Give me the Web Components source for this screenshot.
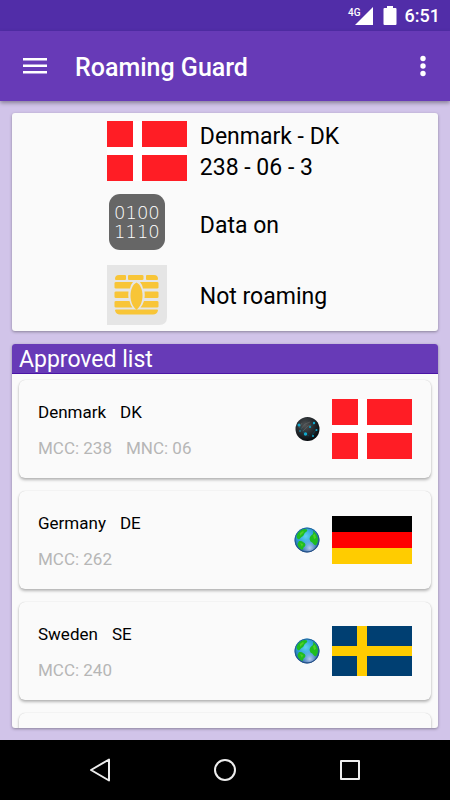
<!DOCTYPE html>
<html lang="en">
<head>
<meta charset="utf-8">
<meta name="viewport" content="width=device-width, initial-scale=1">
<title>Roaming Guard</title>
<style>
  html, body { margin: 0; height: 100%; }
  body { font-family: Roboto, "Noto Sans", sans-serif; color: #000; background: #d1c4e9; }
</style>
</head>
<body>
<roaming-app></roaming-app>
<script>
const define = (name, html, pick) => {
  customElements.define(name, class extends HTMLElement {
    constructor() {
      super();
      this.attachShadow({ mode: 'open' });
    }
    connectedCallback() {
      this.shadowRoot.innerHTML = html + (pick ? pick(this) : '');
    }
  });
};

const flags = {
  dk: `<svg viewBox="0 0 80 60" width="80" height="60"><path fill="#fff" d="M0 0h80v60H0z"/><path fill="#ff1d25" d="M0 0h26v26H0zM35 0h45v26H35zM0 34h26v26H0zM35 34h45v26H35z"/></svg>`,
  de: `<svg viewBox="0 0 80 48" width="80" height="48"><path d="M0 0h80v16H0z"/><path fill="#f00" d="M0 16h80v16H0z"/><path fill="#fc0" d="M0 32h80v16H0z"/></svg>`,
  se: `<svg viewBox="0 0 80 50" width="80" height="50"><path fill="#003f72" d="M0 0h80v50H0z"/><path fill="#fc0" d="M25 0h10v20h45v10H35v20H25V30H0V20h25z"/></svg>`
};

const globes = {
  day: `<svg viewBox="0 0 26 26" width="26" height="26"><defs>
    <radialGradient id="sea" cx=".45" cy=".35" r=".65"><stop offset="0" stop-color="#5fd2f2"/><stop offset=".5" stop-color="#2f9fd6"/><stop offset=".85" stop-color="#2468a8"/><stop offset="1" stop-color="#17427c"/></radialGradient>
    <radialGradient id="glow" cx=".62" cy=".85" r=".4"><stop offset="0" stop-color="#c4d4f5" stop-opacity=".9"/><stop offset="1" stop-color="#9fb8ea" stop-opacity="0"/></radialGradient></defs>
    <circle cx="13" cy="13" r="12.500" fill="url(#sea)"/><circle cx="13" cy="13" r="11.500" fill="url(#glow)"/>
    <path fill="#1fbd20" d="M2.500 8.500Q4 4.500 8 2.500q3-1 5 0 1 1.500-1 2.500-1.500.5-2 2.500-.5 1.500-2.500 2.500L5 12.500Q2.500 12 2.500 8.500zM19 3.500q4 3 5 8 .3 4-1.800 6.500-2 .5-2.700-1-1-2-3-2.500-1.800-2-.5-4.500 1-2 2.500-2.500 1.500-1 .5-4zM5 14q3-.5 4 1 2.500 1 2.500 3-.5 1.500-2 2.500l-1 2.500Q4 21 3.500 17z"/>
    <path fill="#75d932" opacity=".6" d="M6 6l3-2 1 1-4 4zM19 8l2-1 1 4-2 1zM6 16l3 1-1 3z"/>
    <circle cx="13" cy="13" r="12" fill="none" stroke="#1e4b83" opacity=".7"/></svg>`,
  night: `<svg viewBox="0 0 26 26" width="26" height="26"><defs>
    <radialGradient id="dark" cx=".4" cy=".35" r=".65"><stop offset="0" stop-color="#505456"/><stop offset=".5" stop-color="#2b3034"/><stop offset="1" stop-color="#080c10"/></radialGradient></defs>
    <circle cx="13.500" cy="13" r="12" fill="url(#dark)"/>
    <path fill="none" stroke="#6b6d6e" opacity=".5" d="M7 13l4-5 5-2M9 15l5-5 3-1M5 12l3-5"/>
    <path fill="none" stroke="#0f5266" opacity=".6" d="M5 9l5 8 5 3M16 11l5-4M18 19l4-5"/>
    <g fill="#11a8cc"><circle cx="5" cy="9" r="1.500"/><circle cx="11.500" cy="18" r="1.700"/><circle cx="20" cy="7" r="1.200"/><circle cx="16" cy="11" r="1"/><circle cx="19" cy="20" r="1"/><circle cx="22.500" cy="14" r="1"/><circle cx="6" cy="15" r=".8"/></g></svg>`
};

define('country-flag', `<style>:host{display:block;width:80px}svg{display:block}</style>`,
  el => flags[el.getAttribute('code')] || '');

define('globe-icon', `<style>:host{display:block;width:26px}svg{display:block}</style>`,
  el => globes[el.getAttribute('mode')] || '');

define('status-bar', `<style>
  :host{display:flex;justify-content:flex-end;align-items:center;height:31px;flex:none;padding:0 10px;background:#512da8;color:#fff;font-size:18px;line-height:24px;font-weight:500}
  svg{display:block}
  .net{font-size:10px;line-height:12px}
  .signal{display:flex;align-items:flex-start;margin-right:10px}
  .signal svg{margin-left:-6px}
  .battery{margin-right:8px}
  </style>
  <div class="signal"><span class="net">4G</span><svg width="18" height="18" viewBox="0 0 18 18"><path fill="#fff" d="M18 0v18H0z"/></svg></div>
  <svg class="battery" width="14" height="20" viewBox="0 0 14 20"><path fill="#fff" d="M4 0h6v2h2.500q1 0 1 1v15q0 1-1 1h-11q-1 0-1-1V3q0-1 1-1H4z"/></svg>
  <time>6:51</time>`);

define('app-toolbar', `<style>
  :host{display:flex;align-items:center;height:70px;flex:none;padding:0 12px 0 20px;background:#673ab7;color:#fff;box-shadow:0 2px 4px rgba(0,0,0,.35);z-index:1}
  button{display:block;border:0;padding:0;background:none;color:inherit}
  svg{display:block}
  h1{flex:1;margin:0 0 0 25px;padding-top:4px;font-size:25px;line-height:32px;font-weight:500}
  </style>
  <button aria-label="Menu"><svg width="30" height="30" viewBox="0 0 30 30"><path fill="currentColor" d="M3 7h24v2.500H3zM3 13.500h24V16H3zM3 20h24v2.500H3z"/></svg></button>
  <h1><slot></slot></h1>
  <button aria-label="More options"><svg width="30" height="30" viewBox="0 0 30 30"><g fill="currentColor"><circle cx="15" cy="7.500" r="2.700"/><circle cx="15" cy="15" r="2.700"/><circle cx="15" cy="22.500" r="2.700"/></g></svg></button>`);

define('status-card', `<style>
  :host{display:grid;grid-template-columns:80px auto;column-gap:13px;row-gap:11px;justify-content:center;align-items:center;flex:none;padding:5px 4px 6px 0;border-radius:3px;background:#fafafa;box-shadow:0 1px 3px rgba(0,0,0,.35);font-size:23px;line-height:31px}
  ::slotted(div){padding-top:3px}
  </style><slot></slot>`);

define('data-icon', `<style>:host{display:block;padding:0 2px 4px}svg{display:block}
  text{font-family:"DejaVu Sans",sans-serif;font-size:18px;font-weight:200;fill:#fff}</style>
  <svg width="56" height="56" viewBox="0 0 56 56"><rect width="56" height="56" rx="11" fill="#666"/><text x="5" y="25">0100</text><text x="5" y="44">1110</text></svg>`);

define('sim-icon', `<style>:host{display:block}svg{display:block}</style>
  <svg width="60" height="60" viewBox="0 0 60 60"><path fill="#e5e5e5" d="M0 0h60v52q0 8-8 8H0z"/>
  <g fill="#f8c537"><path d="M12 10h6q1 0 1 1v3q0 1-1 1H9q-1 0-1-1 0-4 4-4zM22 10h13q1.500 0 1.500 1v3q0 1-1.500 1H22q-1 0-1-1v-3q0-1 1-1zM40 10h7q4 0 4 4 0 1-1 1H40q-1 0-1-1v-3q0-1 1-1z"/>
  <path d="M9 17h17q-2 2-3 6.500H9q-1.500 0-1.500-1V18q0-1 1.500-1zM33 17h17q1.500 0 1.500 1v4.500q0 1-1.500 1H36Q35 19 33 17zM9 26.500h12.500Q21 30 21.500 33H9q-1.500 0-1.500-1v-4.500q0-1 1.500-1zM37.500 26.500h12.500q1.500 0 1.500 1V32q0 1-1.500 1H37.500Q38 30 37.500 26.500zM9 36h13.500q1 4.500 3 6.500H9q-1.500 0-1.500-1V37q0-1 1.500-1zM37 36h13q1.500 0 1.500 1v4.500q0 1-1.500 1H33.500q2-2 3.500-6.500z"/>
  <path d="M29.500 17.500c8 4 8 22 0 27h20.500q1 0 1 1-1 4-5 4H13q-4 0-5-4 0-1 1-1h20.500c-8-5-8-23 0-27z"/></g></svg>`);

define('country-list', `<style>
  :host{display:flex;flex-direction:column;flex:1;min-height:0;overflow:hidden;border-radius:3px;background:#fafafa;box-shadow:0 1px 3px rgba(0,0,0,.35)}
  h2{margin:0;padding:2px 7px 0;flex:none;background:#673ab7;box-shadow:inset 0 -1px #4a15a5;color:#fff;font-size:23px;line-height:28px;font-weight:400}
  .items{display:flex;flex-direction:column;gap:13px;padding:6px 7px;flex:1;min-height:0;overflow:hidden}
  </style><h2>Approved list</h2><div class="items"><slot></slot></div>`);

define('country-item', `<style>
  :host{display:flex;align-items:center;gap:12px;flex:none;height:98px;box-sizing:border-box;padding:0 19px;border-radius:6px;background:#fafafa;box-shadow:0 0 1px rgba(0,0,0,.2),0 2px 3px rgba(0,0,0,.27)}
  .info{flex:1;display:flex;flex-direction:column;gap:12px;padding-top:2px;font-size:17px;line-height:24px}
  .row{display:flex;gap:14px}
  .codes{color:#b6b6b6}
  </style>
  <div class="info"><div class="row"><slot name="name"></slot><slot name="code"></slot></div><div class="row codes"><slot name="mcc"></slot><slot name="mnc"></slot></div></div>
  <slot></slot>`);

define('nav-bar', `<style>
  :host{display:grid;grid-template-columns:repeat(3,125px);justify-content:center;align-items:center;height:60px;flex:none;background:#000;color:#ededed}
  button{display:block;justify-self:center;border:0;padding:0;background:none;color:inherit}
  svg{display:block;fill:none;stroke:currentColor;stroke-width:2;stroke-linejoin:round}
  </style>
  <button aria-label="Back"><svg width="26" height="26" viewBox="0 0 26 26"><path d="M22 2.500v21L4 13z"/></svg></button>
  <button aria-label="Home"><svg width="26" height="26" viewBox="0 0 26 26"><circle cx="13" cy="13" r="10"/></svg></button>
  <button aria-label="Recent apps"><svg width="26" height="26" viewBox="0 0 26 26"><path d="M4 4h18v18H4z"/></svg></button>`);

define('roaming-app', `<style>
  :host{display:flex;flex-direction:column;height:100vh}
  main{display:flex;flex-direction:column;gap:13px;flex:1;min-height:0;box-sizing:border-box;padding:12px}
  </style>
  <status-bar></status-bar>
  <app-toolbar>Roaming Guard</app-toolbar>
  <main>
    <status-card>
      <country-flag code="dk"></country-flag><div>Denmark - DK<br>238 - 06 - 3</div>
      <data-icon></data-icon><div>Data on</div>
      <sim-icon></sim-icon><div>Not roaming</div>
    </status-card>
    <country-list>
      <country-item><span slot="name">Denmark</span><span slot="code">DK</span><span slot="mcc">MCC: 238</span><span slot="mnc">MNC: 06</span><globe-icon mode="night"></globe-icon><country-flag code="dk"></country-flag></country-item>
      <country-item><span slot="name">Germany</span><span slot="code">DE</span><span slot="mcc">MCC: 262</span><globe-icon mode="day"></globe-icon><country-flag code="de"></country-flag></country-item>
      <country-item><span slot="name">Sweden</span><span slot="code">SE</span><span slot="mcc">MCC: 240</span><globe-icon mode="day"></globe-icon><country-flag code="se"></country-flag></country-item>
      <country-item></country-item>
    </country-list>
  </main>
  <nav-bar></nav-bar>`);
</script>
</body>
</html>
